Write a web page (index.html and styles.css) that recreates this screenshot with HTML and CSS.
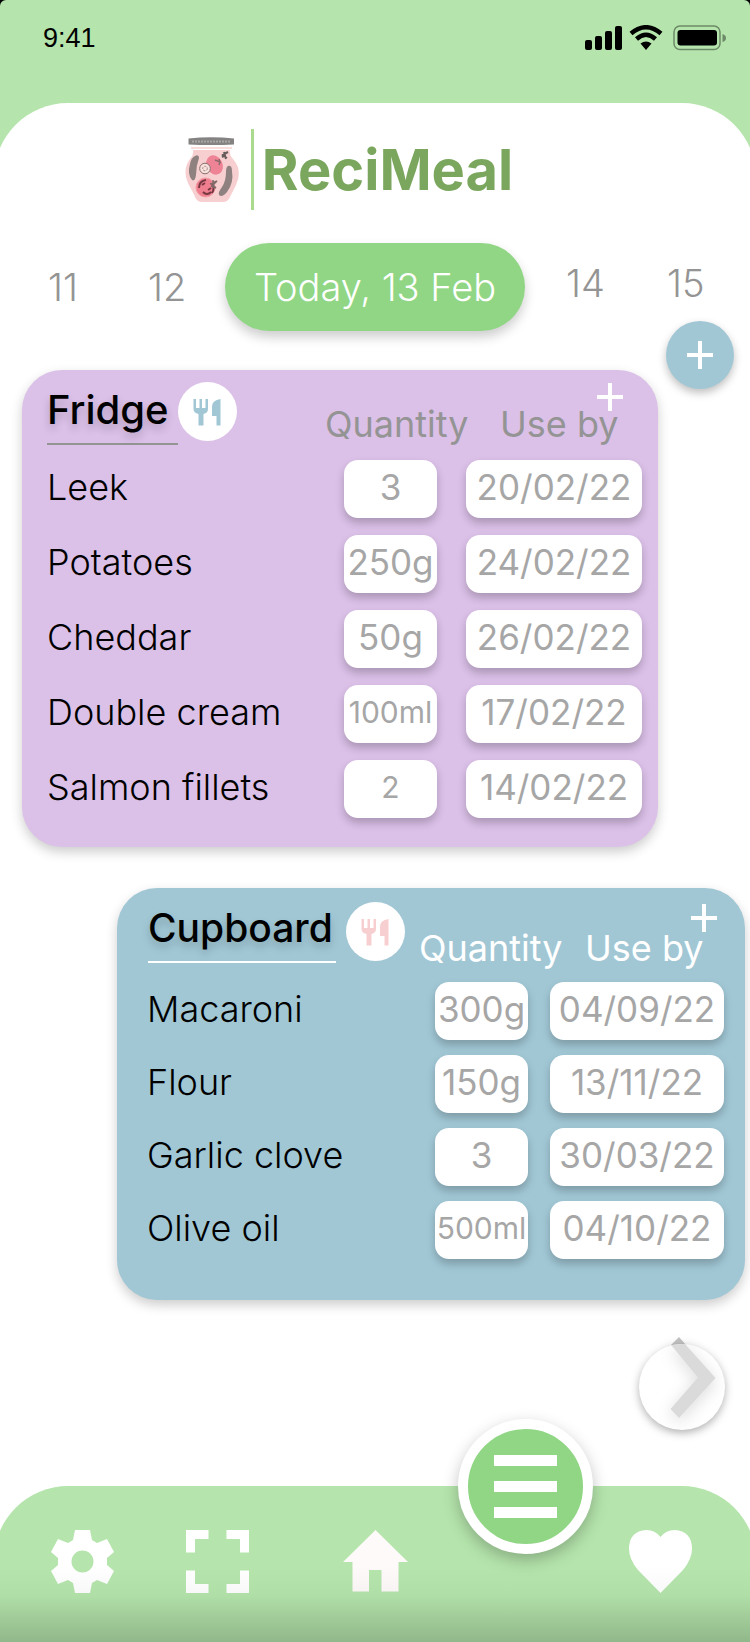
FILE: index.html
```html
<!DOCTYPE html>
<html lang="en">
<head>
<meta charset="utf-8">
<meta name="viewport" content="width=device-width, initial-scale=1">
<title>ReciMeal</title>
<link rel="stylesheet" href="styles.css">
</head>
<body>
<div class="app">
  <header class="status">
    <span class="clock">9:41</span>
    <svg class="status-icons" viewBox="0 0 142 26" role="img" aria-label="Signal, Wi-Fi and battery">
      <rect x="0" y="15" width="7" height="10" rx="2"/>
      <rect x="10" y="11" width="7" height="14" rx="2"/>
      <rect x="20" y="6" width="7" height="19" rx="2"/>
      <rect x="30" y="1" width="7" height="24" rx="2"/>
      <g fill="none" stroke="#000">
        <path d="M46 8.500Q61-4 76 8.500" stroke-width="4.500"/>
        <path d="M51.500 14Q61 5.500 70.500 14" stroke-width="4.500"/>
      </g>
      <path d="M55.500 18.500Q61 14.500 66.500 18.500L61 25z"/>
      <rect x="89" y="1" width="46" height="23.500" rx="6" fill="none" stroke="#000" stroke-opacity=".4" stroke-width="1.500"/>
      <rect x="92.500" y="5" width="39.500" height="15.500" rx="3"/>
      <path d="M137.500 9v8q3.500-1 3.500-4t-3.500-4z" fill-opacity=".4"/>
    </svg>
  </header>

  <main class="sheet">
    <h1 class="logo">
      <svg class="jar" viewBox="0 0 54 66" aria-hidden="true">
        <path d="M6 10h41v2H6z" fill="#f9dcdc"/>
        <path d="M8 13h37q-1 5 3 9 10 11 3 26-3 6-6 12-2 5-7 5H17q-5 0-7-5-2-5-5-10-9-16 0-28 4-4 3-9z" fill="#f7cfd0"/>
        <path d="M3.500 1.500Q26-1 49 1.500v6q-23 1-45.500 0z" fill="#858282"/>
        <path d="M7 4.500h39" stroke="#aaa6a6" stroke-width="2" stroke-dasharray="2 1"/>
        <path d="M10 19q4-2 4 2-3 8-3 17-1 7-4 5-5-6-2-16 1-6 5-8z" fill="#8f8180"/>
        <path d="M43 29q4-1 4 5 2 12-5 21-5 6-8 3-1-3 3-8 4-6 4-15 0-5 2-6z" fill="#8f8180"/>
        <ellipse cx="29.500" cy="28" rx="8" ry="10" transform="rotate(-28 29.500 28)" fill="#ef8396"/>
        <path d="M30 23l5 2-1-3m1 3l-1 3" fill="none" stroke="#8f6a6c" stroke-width="1.500"/>
        <circle cx="20" cy="31.500" r="5.300" fill="#fae2df" stroke="#86706f"/>
        <circle cx="20" cy="31.500" r="2.300" fill="none" stroke="#9a8583" stroke-dasharray="2 1"/>
        <circle cx="20.500" cy="50.500" r="9.500" fill="#ef7f8e" stroke="#f49ca6"/>
        <path d="M14 51q0-7 7-8m-4 5l3-2m-2 9q4 4 8 0m1-8q3 5 0 9m-4-3l3-2" fill="none" stroke="#763943" stroke-width="2"/>
        <path d="M25 47l7-3-4 4 3 3-5-2m2-6v5" fill="none" stroke="#806b69" stroke-width="1.500"/>
        <path d="M37 18l6-3m-6 3l5 3m-3-6l2 7m1-6v-1m-5 5l2-1" stroke="#665b5b" stroke-width="2"/>
      </svg>
      <span class="logo-rule"></span>
      <span>ReciMeal</span>
    </h1>

    <nav class="days" aria-label="Day">
      <div class="days-before"><a href="#11">11</a><a href="#12">12</a></div>
      <a class="today" href="#13" aria-current="date">Today, 13 Feb</a>
      <div class="days-after"><a href="#14">14</a><a href="#15">15</a></div>
    </nav>

    <div class="fridge-row">
      <section class="card fridge">
        <table>
          <thead>
            <tr>
              <th class="title" scope="col">
                <h2>Fridge</h2>
                <button class="badge" type="button" aria-label="Recipes from the fridge">
                  <svg viewBox="0 0 28 28"><path d="M.500 1H3v9h3.500V1H9v9h3.500V1H15v10q0 4-4.500 5v11.500h-5V16Q.500 15 .500 11zM27.500 1v26.500h-4V18H19V9q0-7 8.500-8z"/></svg>
                </button>
              </th>
              <th class="col" scope="col">Quantity</th>
              <th class="col" scope="col">Use by</th>
            </tr>
          </thead>
          <tbody>
            <tr><th scope="row">Leek</th><td><input aria-label="Leek quantity" value="3"></td><td><input aria-label="Leek use by" value="20/02/22"></td></tr>
            <tr><th scope="row">Potatoes</th><td><input aria-label="Potatoes quantity" value="250g"></td><td><input aria-label="Potatoes use by" value="24/02/22"></td></tr>
            <tr><th scope="row">Cheddar</th><td><input aria-label="Cheddar quantity" value="50g"></td><td><input aria-label="Cheddar use by" value="26/02/22"></td></tr>
            <tr><th scope="row">Double cream</th><td><input class="small" aria-label="Double cream quantity" value="100ml"></td><td><input aria-label="Double cream use by" value="17/02/22"></td></tr>
            <tr><th scope="row">Salmon fillets</th><td><input class="small" aria-label="Salmon fillets quantity" value="2"></td><td><input aria-label="Salmon fillets use by" value="14/02/22"></td></tr>
          </tbody>
        </table>
        <button class="add" type="button" aria-label="Add to fridge"><svg viewBox="0 0 26 28"><path d="M0 14h26M13 0v28"/></svg></button>
      </section>
      <button class="fab" type="button" aria-label="Add a section"><svg viewBox="0 0 26 28"><path d="M0 14h26M13 0v28"/></svg></button>
    </div>

    <section class="card cupboard">
      <table>
        <thead>
          <tr>
            <th class="title" scope="col">
              <h2>Cupboard</h2>
              <button class="badge" type="button" aria-label="Recipes from the cupboard">
                <svg viewBox="0 0 28 28"><path d="M.500 1H3v9h3.500V1H9v9h3.500V1H15v10q0 4-4.500 5v11.500h-5V16Q.500 15 .500 11zM27.500 1v26.500h-4V18H19V9q0-7 8.500-8z"/></svg>
              </button>
            </th>
            <th class="col" scope="col">Quantity</th>
            <th class="col" scope="col">Use by</th>
          </tr>
        </thead>
        <tbody>
          <tr><th scope="row">Macaroni</th><td><input aria-label="Macaroni quantity" value="300g"></td><td><input aria-label="Macaroni use by" value="04/09/22"></td></tr>
          <tr><th scope="row">Flour</th><td><input aria-label="Flour quantity" value="150g"></td><td><input aria-label="Flour use by" value="13/11/22"></td></tr>
          <tr><th scope="row">Garlic clove</th><td><input aria-label="Garlic clove quantity" value="3"></td><td><input aria-label="Garlic clove use by" value="30/03/22"></td></tr>
          <tr><th scope="row">Olive oil</th><td><input class="small" aria-label="Olive oil quantity" value="500ml"></td><td><input aria-label="Olive oil use by" value="04/10/22"></td></tr>
        </tbody>
      </table>
      <button class="add" type="button" aria-label="Add to cupboard"><svg viewBox="0 0 26 28"><path d="M0 14h26M13 0v28"/></svg></button>
    </section>

    <button class="next" type="button" aria-label="Next">
      <svg viewBox="0 0 108 116">
        <path d="M51 11L87 52 51 92 42.500 83 70 51.500 43 19z" fill="#c4c4c4"/>
        <circle class="next-disc" cx="54" cy="61" r="43"/>
        <path class="next-arrow" d="M43.500 19.500Q50 17.500 57 18L87.500 52 51 92 42.500 83 70 51.500z"/>
      </svg>
    </button>
  </main>

  <nav class="tabs" aria-label="Main">
    <a href="#settings" aria-label="Settings"><svg viewBox="0 0 63 63"><path fill-rule="evenodd" d="M24 0h15l2 10 5 3 10-4 7 13-7 6v7l7 6-7 13-10-4-5 3-2 10H24l-2-10-5-3-10 4-7-13 7-6v-7l-7-6L7 9l10 4 5-3zM31.500 20.500a11 11 0 100 22 11 11 0 000-22z"/></svg></a>
    <a href="#scan" aria-label="Scan"><svg viewBox="0 0 63 63"><path d="M0 0h22.500v9H9v13.500H0zM40.500 0H63v22.500h-9V9H40.500zM0 40.500h9V54h13.500v9H0zM54 40.500h9V63H40.500v-9H54z"/></svg></a>
    <a class="home" href="#home" aria-label="Home"><svg viewBox="0 0 65 63"><path d="M32.500 0L65 32h-9.500v29.500h-17V40H26v21.500H9.500V32H0z"/></svg></a>
    <button class="menu" type="button" aria-label="Menu"><svg viewBox="0 0 63 63"><path d="M0 0h63v11H0zM0 26h63v11H0zM0 52h63v11H0z"/></svg></button>
    <a href="#favourites" aria-label="Favourites"><svg viewBox="0 0 63 63"><path d="M31.500 7Q26 0 17.500 0 0 1 0 19q0 10 9 21l22.500 23L54 40q9-11 9-21Q63 1 45.500 0 37 0 31.500 7z"/></svg></a>
  </nav>
</div>
</body>
</html>
```
FILE: styles.css
```css
* { box-sizing: border-box; }

html { background: #000; }

body {
  margin: 0;
  font-family: Inter, "Open Sans", sans-serif;
  font-weight: 400;
  color: #000;
}

button {
  border: 0;
  padding: 0;
  background: none;
  cursor: pointer;
}

svg { display: block; }
a { color: inherit; text-decoration: none; }
h1, h2 { margin: 0; }

.app {
  display: flex;
  flex-direction: column;
  min-height: 100vh;
  overflow: hidden;
  border-radius: 6px 6px 0 0;
  background: #fff linear-gradient(#b5e5ac, #b5e5ac) top / 100% 200px no-repeat;
}

/* Status bar */
.status {
  display: flex;
  align-items: center;
  justify-content: space-between;
  height: 103px;
  padding: 0 23px 27px 43px;
}

.clock {
  font: 27px "Liberation Sans", Arial, sans-serif;
}

.status-icons { width: 142px; height: 26px; }

/* White sheet */
.sheet {
  display: flex;
  flex: 1;
  flex-direction: column;
  margin: 0 -6px;
  padding: 26px 6px 0;
  border-radius: 74px 74px 0 0;
  background: #fff;
}

.logo {
  display: flex;
  align-items: center;
  justify-content: center;
  height: 81px;
  padding-right: 52px;
  color: #7aa75d;
  font-size: 56px;
  font-weight: 700;
  line-height: 80px;
}

.jar { width: 54px; height: 66px; }

.logo-rule {
  width: 3px;
  height: 81px;
  margin: 0 8px 0 12px;
  background: #a9da8e;
}

/* Day picker */
.days {
  display: grid;
  grid-template-columns: minmax(0, 1fr) auto minmax(0, 1fr);
  align-items: center;
  margin-top: 33px;
  color: #949494;
  font-size: 38px;
  font-weight: 300;
}

.days-before, .days-after { display: flex; }
.days-before { gap: 70px; padding-left: 48px; }
.days-after { gap: 62px; padding: 0 0 8px 41px; }

.today {
  padding: 0 29px;
  border-radius: 44px;
  background: #90d684;
  box-shadow: 0 6px 12px rgba(0, 0, 0, .2);
  color: #fff;
  line-height: 88px;
  white-space: nowrap;
}

/* Storage cards */
.fridge-row {
  display: flex;
  align-items: flex-start;
  gap: 8px;
  margin-top: 39px;
  padding: 0 16px 0 22px;
}

.fridge-row .card { flex: 1; }

.card {
  position: relative;
  border-radius: 40px;
  box-shadow: 0 5px 12px rgba(0, 0, 0, .2);
}

.fridge {
  padding-bottom: 29px;
  background: #dbc0e8;
}

.cupboard {
  margin: 41px 5px 0 117px;
  padding-bottom: 41px;
  background: #a1c7d5;
}

.card table, .card thead { display: block; }
.card tbody { display: grid; }
.card tr { display: grid; }
.card th, .card td { padding: 0; text-align: left; }

.fridge thead tr {
  grid-template-columns: 1fr 148px 114px;
  gap: 27px;
  height: 90px;
  padding: 12px 44px 0 25px;
}

.cupboard thead tr {
  grid-template-columns: 1fr 148px 114px;
  gap: 18px;
  height: 94px;
  padding: 12px 46px 0 31px;
}

.fridge tbody { gap: 17px; }
.cupboard tbody { gap: 15px; }

.fridge tbody tr {
  grid-template-columns: 1fr 93px 176px;
  gap: 29px;
  padding: 0 16px 0 25px;
}

.cupboard tbody tr {
  grid-template-columns: 1fr 93px 174px;
  gap: 22px;
  padding: 0 21px 0 30px;
}

.title {
  display: flex;
  align-items: flex-start;
  min-width: 0;
}

.title h2 {
  margin-top: 4px;
  padding: 0 9px 9px 0;
  border-bottom: 2px solid #949494;
  font-size: 40px;
  font-weight: 500;
  line-height: 48px;
  text-shadow: 0 5px 8px rgba(0, 0, 0, .2);
}

.cupboard .title { gap: 10px; }

.cupboard .title h2 {
  padding-right: 3px;
  border-color: #fff;
  font-size: 39px;
}

.badge {
  display: grid;
  flex: none;
  place-items: center;
  width: 59px;
  height: 59px;
  border-radius: 50%;
  background: #fff;
}

.badge svg { width: 28px; height: 28px; }
.fridge .badge { fill: #a1c7d5; }
.cupboard .badge { margin-top: 2px; fill: #f8cfd0; }

.col {
  font-size: 36px;
  font-weight: 400;
  line-height: 48px;
  white-space: nowrap;
}

.fridge .col { padding-top: 18px; color: #949494; }
.cupboard .col { padding-top: 24px; color: #fff; }

.card tbody th {
  font-size: 36px;
  font-weight: 300;
  line-height: 54px;
  white-space: nowrap;
}

.card input {
  display: block;
  width: 100%;
  height: 58px;
  padding: 0 0 4px;
  border: 0;
  border-radius: 14px;
  background: #fff;
  box-shadow: 0 5px 9px rgba(0, 0, 0, .22);
  color: #a6a6a6;
  font: 400 35px Inter, "Open Sans", sans-serif;
  text-align: center;
}

.card input.small { font-size: 30px; }

.add svg, .fab svg {
  width: 26px;
  height: 28px;
  fill: none;
  stroke: #fff;
  stroke-width: 4px;
}

.add { position: absolute; }
.fridge .add { top: 13px; right: 35px; }
.cupboard .add { top: 16px; right: 28px; }

.fab {
  display: grid;
  flex: none;
  place-items: center;
  width: 68px;
  height: 68px;
  margin-top: -49px;
  border-radius: 50%;
  background: #a1c7d5;
  box-shadow: 0 4px 8px rgba(0, 0, 0, .25);
}

.next {
  align-self: flex-end;
  margin: 26px 14px 34px 0;
}

.next svg { width: 108px; height: 116px; }

.next-disc {
  fill: #fff;
  filter: drop-shadow(0 3px 4px rgba(0, 0, 0, .3));
}

.next-arrow {
  fill: #dadada;
  filter: drop-shadow(0 4px 8px rgba(0, 0, 0, .15));
}

/* Bottom tabs */
.tabs {
  position: relative;
  display: grid;
  grid-template-columns:
    minmax(0, 164fr) minmax(0, 106fr) minmax(0, 211fr)
    minmax(0, 89fr) minmax(0, 180fr);
  justify-items: center;
  align-items: start;
  height: 156px;
  padding-top: 44px;
  isolation: isolate;
}

.tabs::before {
  content: "";
  position: absolute;
  z-index: -1;
  inset: 0 -6px;
  border-radius: 74px 74px 0 0;
  background: #b5e5ac;
}

.tabs::after {
  content: "";
  position: absolute;
  inset: 80px 0 0;
  background: linear-gradient(transparent, rgba(0, 0, 0, .03) 40%, rgba(0, 0, 0, .2));
  pointer-events: none;
}

.tabs svg {
  width: 63px;
  height: 63px;
  fill: #fff;
}

.tabs .home svg { width: 65px; fill: #fffafa; }

.menu {
  display: grid;
  place-items: center;
  width: 135px;
  height: 135px;
  margin-top: -111px;
  border: 10px solid #fff;
  border-radius: 50%;
  background: #90d684;
  box-shadow: 0 6px 16px rgba(0, 0, 0, .25);
}
```
